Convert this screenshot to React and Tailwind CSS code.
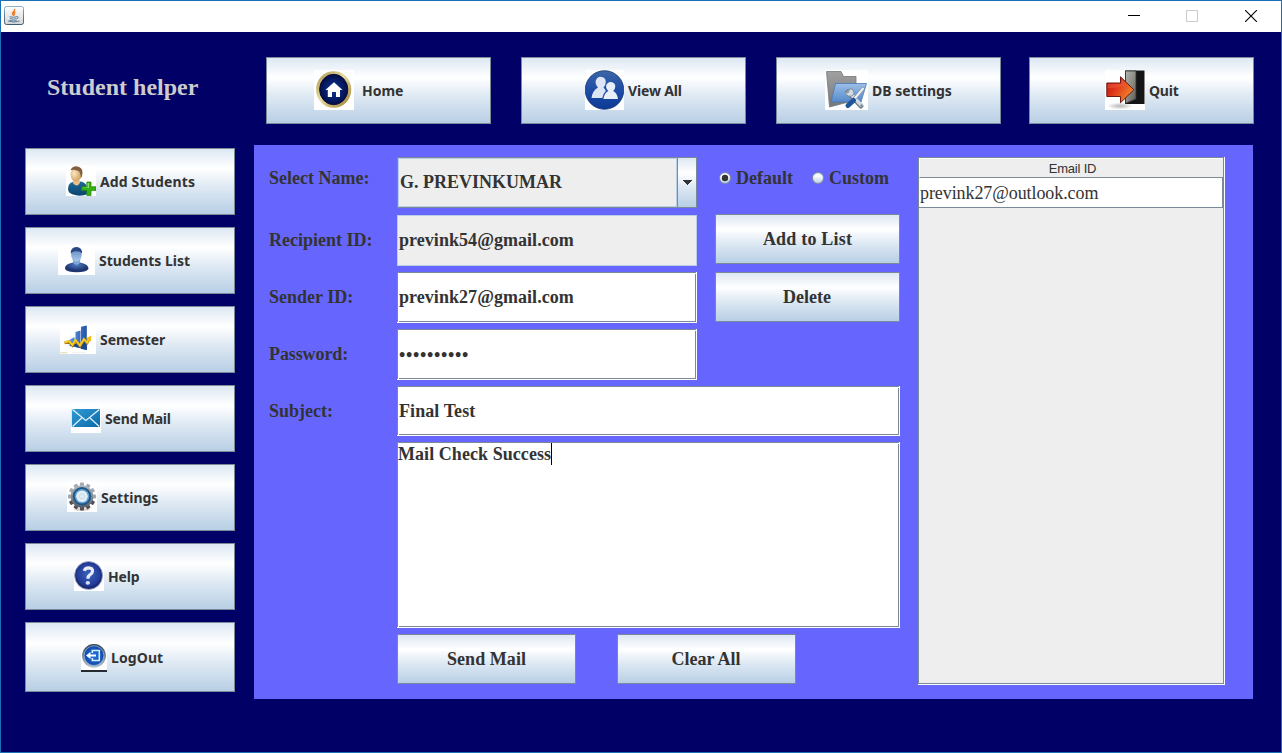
import React from "react";

const METAL =
  "border border-[#7a8a99] bg-[linear-gradient(to_bottom,#dde8f3_0%,#ffffff_30%,#dde8f3_60%,#b8cfe5_100%)] text-[#333333]";
const SERIF = "font-['Liberation_Serif',serif] font-bold text-[18px] leading-none whitespace-pre";

function JavaIcon() {
  return (
    <svg width="20" height="20" viewBox="0 0 20 20">
      <defs>
        <linearGradient id="jv" x1="0" y1="0" x2="0" y2="1">
          <stop offset="0" stopColor="#ffffff" />
          <stop offset="1" stopColor="#d4d4d4" />
        </linearGradient>
        <linearGradient id="jb" x1="0" y1="0" x2="0" y2="1">
          <stop offset="0" stopColor="#8fb0c4" />
          <stop offset="1" stopColor="#3c5a70" />
        </linearGradient>
      </defs>
      <rect x="0.5" y="0.5" width="19" height="18" rx="2" fill="url(#jv)" stroke="url(#jb)" />
      <path d="M10.5 3 C12 5 7.5 6 8.5 8 L10 10 M11.3 6 C9.5 7 10 8 10.8 9" stroke="#ee7f2b" strokeWidth="1.5" fill="none" />
      <path d="M5.5 10.7 Q9.5 12 13 10.6 M6 12.5 Q9.5 14 12.5 12.5 M13 10.6 Q16 11 12.5 13 M4 15 Q10 17.2 15.5 15 M5.5 14.4 Q9.5 15.5 12.5 14.5" stroke="#5b83a3" strokeWidth="1" fill="none" />
    </svg>
  );
}

function HomeIcon() {
  return (
    <svg width="40" height="40" viewBox="0 0 40 40">
      <defs>
        <linearGradient id="gold" x1="0" y1="0" x2="1" y2="1">
          <stop offset="0" stopColor="#a88f45" />
          <stop offset="0.45" stopColor="#e6dc9e" />
          <stop offset="1" stopColor="#9c7c2c" />
        </linearGradient>
        <radialGradient id="navy">
          <stop offset="0" stopColor="#0d3a9a" />
          <stop offset="1" stopColor="#020c4a" />
        </radialGradient>
      </defs>
      <rect width="40" height="40" fill="#fff" />
      <ellipse cx="19.7" cy="19.5" rx="17.6" ry="18.3" fill="url(#gold)" />
      <ellipse cx="19.7" cy="19.5" rx="14.1" ry="15.2" fill="url(#navy)" stroke="#080f38" />
      <path d="M20 12.3 L28.5 20 H26 V27 H22 V22 H18 V27 H13.8 V20 H11.4 Z" fill="#fff" />
    </svg>
  );
}

function ViewIcon() {
  return (
    <svg width="39" height="40" viewBox="0 0 39 40">
      <defs>
        <linearGradient id="vb" x1="0" y1="0" x2="0" y2="1">
          <stop offset="0" stopColor="#3c66a6" />
          <stop offset="0.5" stopColor="#1d4da6" />
          <stop offset="1" stopColor="#0c3a94" />
        </linearGradient>
      </defs>
      <rect width="39" height="40" fill="#fff" />
      <circle cx="19.5" cy="20" r="19.3" fill="url(#vb)" stroke="#15356f" strokeWidth="0.8" />
      <path d="M6.5 28 Q7.5 20.5 13 17.5 Q9.8 14 10.8 10.5 Q12 6.7 15.7 6.7 Q20.3 7 20.8 11.5 Q21 15 18.5 17.5 Q20.2 19 20.8 21 Q17.8 24 17.3 28 Z" fill="#dce6f5" />
      <path d="M18.3 29 Q19.3 23 23.3 21 Q20.3 18 21.3 15 Q22.8 11.8 26 12 Q30.3 12.6 30.3 16.5 Q30.3 19 28.2 21 Q32.2 23 33 29 Z" fill="#e9eff9" />
    </svg>
  );
}

function DbIcon() {
  return (
    <svg width="43" height="40" viewBox="0 0 43 40">
      <defs>
        <linearGradient id="fold" x1="0" y1="0" x2="0" y2="1">
          <stop offset="0" stopColor="#a0a0a0" />
          <stop offset="1" stopColor="#74777b" />
        </linearGradient>
        <linearGradient id="foldb" x1="0" y1="0" x2="0" y2="1">
          <stop offset="0" stopColor="#9cbfe9" />
          <stop offset="1" stopColor="#5589c9" />
        </linearGradient>
      </defs>
      <rect width="43" height="40" fill="#fff" />
      <path d="M1.5 1.5 H16 L18.5 6.5 H31 V30 L4.5 37 Z" fill="url(#fold)" stroke="#777" strokeWidth="0.8" />
      <path d="M10.5 13.5 H41.5 L36 32 H6 Z" fill="url(#foldb)" stroke="#4b79b4" strokeWidth="0.8" />
      <path d="M23 22 L36 36" stroke="#707f8c" strokeWidth="5" strokeLinecap="round" />
      <path d="M24 22 L36 35" stroke="#d3dbe2" strokeWidth="3.4" strokeLinecap="round" />
      <path d="M20 21.5 L23 23 L25 18.5 Q29 19 29 23 Q28 27 23.5 26 Q20.5 25 20 21.5" fill="#d3dbe2" stroke="#707f8c" strokeWidth="0.8" />
      <path d="M38 18.5 L28 30.5" stroke="#7f8e9b" strokeWidth="3.4" strokeLinecap="round" />
      <path d="M38 18.5 L28 30.5" stroke="#eef2f5" strokeWidth="2" strokeLinecap="round" />
      <path d="M28.5 30.5 L23 35.5" stroke="#22559b" strokeWidth="5" strokeLinecap="round" />
      <circle cx="36.3" cy="35.6" r="1" fill="#6b7884" />
    </svg>
  );
}

function QuitIcon() {
  return (
    <svg width="40" height="40" viewBox="0 0 40 40">
      <defs>
        <linearGradient id="door" x1="0" y1="0" x2="1" y2="1">
          <stop offset="0" stopColor="#b4b4ae" />
          <stop offset="0.5" stopColor="#8c8c85" />
          <stop offset="1" stopColor="#55554f" />
        </linearGradient>
        <linearGradient id="arr" x1="0" y1="0" x2="1" y2="0.6">
          <stop offset="0" stopColor="#b81414" />
          <stop offset="0.4" stopColor="#dd3018" />
          <stop offset="1" stopColor="#f48a2c" />
        </linearGradient>
        <radialGradient id="shd">
          <stop offset="0" stopColor="#b5b5b5" />
          <stop offset="1" stopColor="#ffffff" />
        </radialGradient>
      </defs>
      <rect width="40" height="40" fill="#fff" />
      <ellipse cx="15" cy="36" rx="13" ry="3.5" fill="url(#shd)" />
      <rect x="20" y="0.5" width="19.5" height="33.5" fill="#151515" />
      <path d="M20.5 1 H31 V29 L20.5 33.5 Z" fill="url(#door)" stroke="#333" strokeWidth="0.8" />
      <path d="M1.8 13 H15.5 V6.8 L28.8 19.8 L15.5 32.8 V26.5 H1.8 Z" fill="url(#arr)" stroke="#6a1a12" />
      <path d="M2.8 14 H16.5 V9.5 L22 15 Q12 19 2.8 18 Z" fill="#f26a4c" opacity="0.4" />
    </svg>
  );
}

function AddUserIcon() {
  return (
    <svg width="30" height="30" viewBox="0 0 30 30">
      <defs>
        <radialGradient id="face" cx="0.35" cy="0.4">
          <stop offset="0" stopColor="#fbe7c0" />
          <stop offset="1" stopColor="#d9ae74" />
        </radialGradient>
        <linearGradient id="shirt" x1="0" y1="0" x2="0" y2="1">
          <stop offset="0" stopColor="#1d6a99" />
          <stop offset="1" stopColor="#0b4370" />
        </linearGradient>
      </defs>
      <rect width="30" height="30" fill="#fff" />
      <path d="M2 23 Q2 17 7 16 L15 15.5 Q20 17 20.5 20 L22 28 Q14 31 7 28.5 Q2 27 2 23" fill="url(#shirt)" />
      <path d="M6.5 15.5 L9 13 L14.5 15 Q13 20 10 19.5 Q7 18.5 6.5 15.5" fill="#e9c188" />
      <ellipse cx="10" cy="8.8" rx="5.5" ry="6.9" fill="url(#face)" />
      <path d="M4.5 4.3 Q6 0.5 10.5 0.3 Q16.5 1 16.5 6.5 Q16.5 10.5 14.8 12.5 Q14.8 8 13.3 5.5 Q9 3 4.5 4.3" fill="#80603e" />
      <path d="M20.8 16 H25 V20.7 H30 V24.6 H25 V29.5 H20.8 V24.6 H15.5 V20.7 H20.8 Z" fill="#35b013" stroke="#21830a" strokeWidth="0.7" />
      <path d="M21.6 17 H23 V22 H17 V21.5 H21.6 Z" fill="#8ade66" />
    </svg>
  );
}

function UserIcon() {
  return (
    <svg width="37" height="30" viewBox="0 0 37 30">
      <defs>
        <radialGradient id="suit" cx="0.5" cy="0.3">
          <stop offset="0" stopColor="#4e7fc4" />
          <stop offset="1" stopColor="#1f3672" />
        </radialGradient>
        <linearGradient id="uf" x1="0" y1="0" x2="0" y2="1">
          <stop offset="0" stopColor="#5b84be" />
          <stop offset="1" stopColor="#a9c8ea" />
        </linearGradient>
      </defs>
      <rect width="37" height="30" fill="#fff" />
      <path d="M7 24 Q6.5 19.5 13 18 L18.5 16.5 L24 18 Q30.5 19.5 30.5 24 Q28 27.3 18.7 27.3 Q9.5 27.3 7 24" fill="url(#suit)" />
      <path d="M14.5 14 H22.5 L21.5 18.5 Q18.5 21 15.5 18.5 Z" fill="#7fa6d6" />
      <ellipse cx="18.4" cy="9.5" rx="5.3" ry="7" fill="url(#uf)" />
      <path d="M12.8 8.5 Q12.5 2 18.4 2 Q24.3 2 24 8.5 Q22 6 18.4 6.2 Q15 6 12.8 8.5" fill="#2a4884" />
    </svg>
  );
}

function ChartIcon() {
  return (
    <svg width="36" height="30" viewBox="0 0 36 30">
      <defs>
        <linearGradient id="bar" x1="0" y1="0" x2="1" y2="0">
          <stop offset="0" stopColor="#5c98ea" />
          <stop offset="1" stopColor="#2352a5" />
        </linearGradient>
      </defs>
      <rect width="36" height="30" fill="#fff" />
      <path d="M10 15.5 L14.5 13 V23 L10 22 Z M15.5 8 L20.5 6.5 V24 L15.5 23 Z M21 2.8 L26.8 1.5 V26 L21 25 Z" fill="url(#bar)" />
      <path d="M8 21 L26.8 18 V26 Z" fill="#1f4791" />
      <path d="M4.5 19 L9 17.5 L12.5 21.5 L15.5 16.5 L20 22 L24 15.5 L27 19 L29.5 14.5" fill="none" stroke="#a07808" strokeWidth="2.6" />
      <path d="M4.5 18.5 L9 17 L12.5 21 L15.5 16 L20 21.5 L24 15 L27 18.5 L29.5 14" fill="none" stroke="#f7cb26" strokeWidth="1.9" />
      <path d="M26 14 L31.5 11.5 L31 17.5 Z" fill="#f0c01c" />
      <path d="M0.5 28.7 H7.5" stroke="#e6dfb4" strokeWidth="1.2" />
      <path d="M12 28.7 H26" stroke="#efefef" strokeWidth="1" />
    </svg>
  );
}

function MailIcon() {
  return (
    <svg width="30" height="30" viewBox="0 0 30 30">
      <defs>
        <linearGradient id="env" x1="0" y1="0" x2="1" y2="1">
          <stop offset="0" stopColor="#2f9bd6" />
          <stop offset="1" stopColor="#0a6aa8" />
        </linearGradient>
      </defs>
      <rect width="30" height="30" fill="#fff" />
      <rect x="0.8" y="6" width="28.2" height="18" fill="url(#env)" />
      <path d="M1.5 6.5 L14.8 17.5 L28.3 6.5 M1.5 23.5 L11 14.8 M28.3 23.5 L18.7 14.8" fill="none" stroke="#e4f3fb" strokeWidth="1.2" />
    </svg>
  );
}

const TEETH = [0, 30, 60, 90, 120, 150, 180, 210, 240, 270, 300, 330];

function GearIcon() {
  return (
    <svg width="30" height="30" viewBox="0 0 30 30">
      <defs>
        <linearGradient id="gr" x1="0" y1="0" x2="0" y2="1">
          <stop offset="0" stopColor="#b4bac0" />
          <stop offset="1" stopColor="#595e66" />
        </linearGradient>
      </defs>
      <rect width="30" height="30" fill="#fff" />
      <ellipse cx="15" cy="27.5" rx="8" ry="1.5" fill="#d5cdc8" />
      {TEETH.map((a, i) => (
        <rect key={a} x="13" y="0.5" width="4" height="5" rx="1" fill={i > 3 && i < 9 ? "#4f4f55" : "#a3a9af"} transform={`rotate(${a} 15 14.5)`} />
      ))}
      <circle cx="15" cy="14.5" r="11.3" fill="url(#gr)" />
      <circle cx="15" cy="14.3" r="9.2" fill="#1d5688" />
      <circle cx="15" cy="14.3" r="7.3" fill="#5f9fd0" />
      <circle cx="15" cy="14.3" r="5.8" fill="#e3edf6" />
      <circle cx="15" cy="14.3" r="2.5" fill="none" stroke="#cbd9e6" strokeWidth="1" />
    </svg>
  );
}

function HelpIcon() {
  return (
    <svg width="30" height="30" viewBox="0 0 30 30">
      <defs>
        <radialGradient id="hp" cx="0.5" cy="0.45">
          <stop offset="0" stopColor="#3b62bd" />
          <stop offset="0.8" stopColor="#233c98" />
          <stop offset="1" stopColor="#19266b" />
        </radialGradient>
      </defs>
      <rect width="30" height="30" fill="#fff" />
      <circle cx="14.6" cy="14.5" r="14" fill="url(#hp)" stroke="#a9b3cf" strokeWidth="0.8" />
      <path d="M10.3 9.8 Q11 6.8 14.6 6.8 Q18.8 7 18.5 10.3 Q18.3 12.5 15.8 13.8 Q14 14.9 14 17.8" fill="none" stroke="#e8ecf4" strokeWidth="3.2" />
      <ellipse cx="13.8" cy="21.8" rx="2.2" ry="1.9" fill="#d5e3ec" />
    </svg>
  );
}

function LogoutIcon() {
  return (
    <svg width="26" height="29" viewBox="0 0 26 29">
      <defs>
        <radialGradient id="lo">
          <stop offset="0" stopColor="#1f7ae0" />
          <stop offset="1" stopColor="#1048a8" />
        </radialGradient>
        <linearGradient id="lr" x1="0" y1="0" x2="0" y2="1">
          <stop offset="0" stopColor="#2e3c4d" />
          <stop offset="1" stopColor="#b9c6d2" />
        </linearGradient>
      </defs>
      <rect width="26" height="29" fill="#fff" />
      <circle cx="13" cy="12.8" r="11.9" fill="url(#lr)" />
      <circle cx="13" cy="12.6" r="9.9" fill="url(#lo)" stroke="#9cc0e6" strokeWidth="0.7" />
      <path d="M11.3 10 V7.5 H18.3 V17.5 H11.3 V15" fill="none" stroke="#d6ecff" strokeWidth="1.6" />
      <path d="M15 12.5 H8.5" stroke="#fff" strokeWidth="2" />
      <path d="M5 12.5 L9.5 9 V16 Z" fill="#fff" />
      <rect y="27" width="26" height="2" fill="#272a33" />
    </svg>
  );
}

function NavButton({ icon, label, className, textClass = "ml-1" }) {
  return (
    <button className={`${METAL} flex items-start shrink-0 ${className}`}>
      <span className="block shrink-0">{icon}</span>
      <span className={`self-center font-['Noto_Sans',sans-serif] text-[14px] font-bold leading-none whitespace-pre ${textClass}`}>
        {label}
      </span>
    </button>
  );
}

function FormButton({ label, className }) {
  return <button className={`${METAL} ${SERIF} flex items-center justify-center shrink-0 ${className}`}>{label}</button>;
}

/* Etched frame: dark inner rectangle with a white edge on the right and bottom */
function Field({ children, className, align = "items-center" }) {
  return (
    <div
      className={`relative shrink-0 bg-white pr-px pb-px before:absolute before:left-px before:bottom-px before:size-px before:bg-white after:absolute after:right-px after:top-px after:size-px after:bg-white ${className}`}
    >
      <div className={`${SERIF} flex size-full border border-[#7a8a99] text-[#333333] ${align}`}>{children}</div>
    </div>
  );
}

function Radio({ label, checked, className }) {
  return (
    <label className={`flex items-center ${className}`}>
      <svg width="12" height="12" viewBox="0 0 12 12">
        <defs>
          <linearGradient id="rd" x1="0" y1="0" x2="0" y2="1">
            <stop offset="0" stopColor="#dde8f3" />
            <stop offset="0.3" stopColor="#ffffff" />
            <stop offset="0.6" stopColor="#dde8f3" />
            <stop offset="1" stopColor="#b8cfe5" />
          </linearGradient>
        </defs>
        <circle cx="6" cy="6" r="5.5" fill="url(#rd)" stroke="#7a8a99" />
        {checked && <circle cx="6" cy="6" r="3.2" fill="#333333" />}
      </svg>
      <span className={`${SERIF} ml-[5px] text-[#333333]`}>{label}</span>
    </label>
  );
}

export default function App() {
  return (
    <div className="flex h-[753px] w-[1282px] flex-col overflow-hidden border border-[#1a6fb5] bg-[#000066]">
      <header className="flex h-[31px] shrink-0 items-start bg-white">
        <div className="ml-[3px] mt-[5px]">
          <JavaIcon />
        </div>
        <div className="ml-auto mr-[24px] mt-[9px] flex gap-[46px]">
          <svg width="12" height="12" viewBox="0 0 12 12" shapeRendering="crispEdges">
            <rect y="5" width="12" height="1" fill="#000" />
          </svg>
          <svg width="12" height="12" viewBox="0 0 12 12">
            <rect x="0.5" y="0.5" width="11" height="11" fill="none" stroke="#cccccc" />
          </svg>
          <svg className="ml-px" width="12" height="12" viewBox="0 0 12 12">
            <path d="M0 0 L12 12 M12 0 L0 12" stroke="#000" strokeWidth="1.1" />
          </svg>
        </div>
      </header>

      <div className="flex h-[113px] shrink-0 pt-[25px]">
        <h1 className="w-[265px] shrink-0 pl-[46px] pt-[18px] font-['Liberation_Serif',serif] text-[24px] font-bold leading-none text-[#cccccc]">
          Student helper
        </h1>
        <nav className="flex">
          <NavButton icon={<HomeIcon />} label="Home" className="h-[67px] w-[225px] py-3 pl-[47px]" textClass="ml-2" />
          <NavButton icon={<ViewIcon />} label="View All" className="ml-[30px] h-[67px] w-[225px] py-3 pl-[63px]" textClass="ml-1 tracking-[-0.150px]" />
          <NavButton icon={<DbIcon />} label="DB settings" className="ml-[30px] h-[67px] w-[225px] py-3 pl-[48px]" />
          <NavButton icon={<QuitIcon />} label="Quit" className="ml-[28px] h-[67px] w-[225px] py-3 pl-[75px]" textClass="ml-1 tracking-[-0.200px]" />
        </nav>
      </div>

      <div className="flex">
        <aside className="flex w-[253px] shrink-0 flex-col gap-3 pl-6 pt-[3px]">
          <NavButton icon={<AddUserIcon />} label="Add Students" className="h-[67px] w-[210px] py-[17px] pl-[40px]" textClass="ml-1 tracking-[0.150px]" />
          <NavButton icon={<UserIcon />} label="Students List" className="h-[67px] w-[210px] py-[17px] pl-[32px]" />
          <NavButton icon={<ChartIcon />} label="Semester" className="h-[67px] w-[210px] py-[17px] pl-[34px]" textClass="ml-1 tracking-[-0.080px]" />
          <NavButton icon={<MailIcon />} label="Send Mail" className="h-[67px] w-[210px] py-[17px] pl-[45px]" textClass="ml-1 tracking-[-0.200px]" />
          <NavButton icon={<GearIcon />} label="Settings" className="h-[67px] w-[210px] py-[17px] pl-[41px]" />
          <NavButton icon={<HelpIcon />} label="Help" className="h-[67px] w-[210px] py-[17px] pl-[48px]" textClass="ml-1 tracking-[-0.200px]" />
          <NavButton icon={<LogoutIcon />} label="LogOut" className="h-[70px] w-[210px] pb-[18px] pl-[55px] pt-[20px]" textClass="ml-1 tracking-[0.100px]" />
        </aside>

        <main className="flex h-[554px] w-[999px] shrink-0 bg-[#6666ff] pl-[15px] pt-[12px]">
          <div className={`${SERIF} -mt-px flex w-[128px] shrink-0 flex-col text-[#333333]`}>
            <div className="mb-3 flex h-[43px] items-center">Select Name:</div>
            <div className="flex h-[57px] items-center">Recipient ID:</div>
            <div className="flex h-[57px] items-center">Sender ID:</div>
            <div className="flex h-[57px] items-center tracking-[-0.100px]">Password:</div>
            <div className="flex h-[57px] items-center">Subject:</div>
          </div>

          <div className="flex w-[503px] shrink-0 flex-col">
            <div className="flex">
              <div className="flex w-[300px] flex-col">
                <div className="flex h-[51px] border border-[#7a8a99]">
                  <div className={`${SERIF} flex w-[279px] items-center border border-[#b8cfe5] bg-[#eeeeee] pb-[2px] pl-px text-[#333333]`}>
                    G. PREVINKUMAR
                  </div>
                  <div className="flex flex-1 items-center justify-center border-l border-[#7a8a99] bg-[linear-gradient(to_bottom,#dde8f3_0%,#ffffff_30%,#dde8f3_60%,#b8cfe5_100%)] pr-px">
                    <svg width="10" height="5" viewBox="0 0 10 5" shapeRendering="crispEdges">
                      <path d="M0 0 H10 L5 5 Z" fill="#333333" />
                    </svg>
                  </div>
                </div>
                <div className={`${SERIF} mt-[7px] flex h-[51px] items-center border border-[#b8cfe5] bg-[#eeeeee] pb-[2px] pl-px tracking-[0.050px] text-[#333333]`}>
                  prevink54@gmail.com
                </div>
                <Field className="mt-[6px] h-[51px] w-[300px]">
                  <span className="pl-px tracking-[0.050px]">prevink27@gmail.com</span>
                </Field>
                <Field className="mt-[6px] h-[51px] w-[300px]">
                  <span className="pl-px pt-[2px] tracking-[0.700px]">••••••••••</span>
                </Field>
              </div>
              <div className="ml-[18px] flex w-[185px] flex-col">
                <div className="mb-[15px] flex h-[42px] items-center pl-1">
                  <Radio label="Default" checked className="" />
                  <Radio label="Custom" className="ml-[19px]" />
                </div>
                <FormButton label="Add to List" className="h-[50px] tracking-[0.200px]" />
                <FormButton label="Delete" className="mt-2 h-[50px] pr-px" />
              </div>
            </div>
            <Field className="mt-[6px] h-[50px] w-[503px]">
              <span className="pl-px tracking-[0.080px]">Final Test</span>
            </Field>
            <Field className="mt-[6px] h-[186px] w-[503px]" align="items-start">
              <span className="flex h-[22px] items-center border-r border-black tracking-[0.060px]">Mail Check Success</span>
            </Field>
            <div className="mt-[6px] flex gap-[41px]">
              <FormButton label="Send Mail" className="h-[50px] w-[179px] tracking-[0.060px]" />
              <FormButton label="Clear All" className="h-[50px] w-[179px] pr-px" />
            </div>
          </div>

          <div className="relative ml-[18px] h-[528px] w-[307px] shrink-0 bg-white pr-px pb-px">
            <div className="flex size-full flex-col border border-[#7a8a99] bg-[#eeeeee]">
              <div className="flex h-[20px] shrink-0 items-center justify-center border-l border-t border-white border-b border-b-[#7a8a99] bg-[#eeeeee] pl-[2px] font-['Liberation_Sans',sans-serif] text-[13px] leading-none tracking-[-0.200px] text-[#333333]">
                Email ID
              </div>
              <div className="flex h-[30px] shrink-0 items-center border-b border-r border-[#7a8a99] bg-white pl-px pt-px font-['Liberation_Serif',serif] text-[18px] leading-none tracking-[-0.080px] text-[#333333]">
                prevink27@outlook.com
              </div>
            </div>
          </div>
        </main>
      </div>
    </div>
  );
}
